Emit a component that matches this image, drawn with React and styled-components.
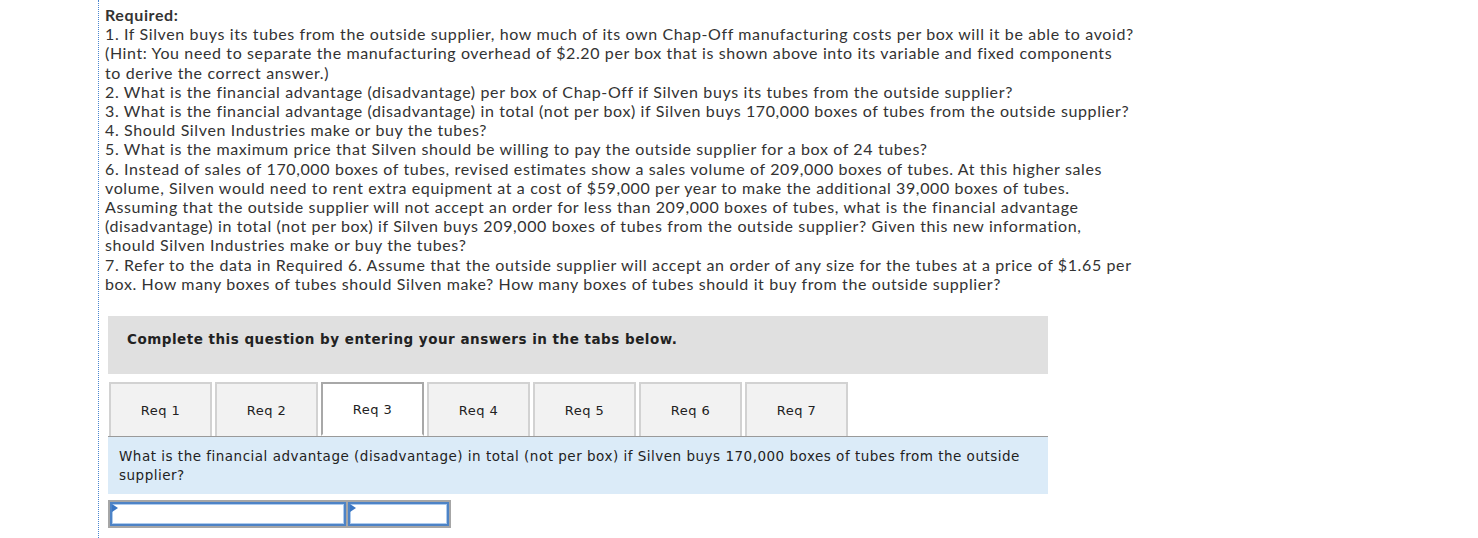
import React from "react";
import styled, { createGlobalStyle } from "styled-components";

const GlobalStyle = createGlobalStyle`
  html, body {
    margin: 0;
    padding: 0;
    background: #fff;
  }
`;

const Page = styled.div`
  margin-left: 98px;
  min-height: 538px;
  border-left: 1px dotted #4a86d0;
  padding: 5px 0 0 6px;
  box-sizing: border-box;
`;

const Prompt = styled.div`
  font-family: Lato, "Liberation Sans", sans-serif;
  font-size: 16px;
  line-height: 19.2px;
  letter-spacing: 0.62px;
  color: #333;
`;

const Heading = styled.div`
  font-weight: 700;
`;

const Line = styled.div`
  white-space: nowrap;
`;

const Work = styled.div`
  margin: 23px 0 0 3px;
  width: 940px;
  font-family: Verdana, "DejaVu Sans", sans-serif;
  font-size: 13.5px;
  letter-spacing: 0.5px;
  color: #222;
`;

const Instructions = styled.div`
  background: #e0e0e0;
  height: 58px;
  box-sizing: border-box;
  padding: 15px 19px 0;
  line-height: 16px;
  font-weight: 700;
  color: #222;
`;

const TabRow = styled.div`
  display: flex;
  gap: 3px;
  margin-top: 8px;
  padding-left: 1px;
  border-bottom: 1px solid #9a9a9a;
`;

const Tab = styled.div`
  box-sizing: border-box;
  width: 103px;
  height: 54px;
  display: flex;
  align-items: center;
  justify-content: center;
  font-size: 13px;
  color: #222;
  background: ${p => (p.$active ? "#fff" : "#f2f2f2")};
  border: 2px solid ${p => (p.$active ? "#a8a8a8" : "#d2d2d2")};
  border-bottom: ${p => (p.$active ? "2px solid #fff" : "none")};
  margin-bottom: ${p => (p.$active ? "-1px" : "0")};
`;

const Question = styled.div`
  background: #dbebf8;
  padding: 10px 11px;
  line-height: 19px;
  color: #222;
  height: 57px;
  box-sizing: border-box;
`;

const AnswerRow = styled.div`
  display: flex;
  margin-top: 6px;
  width: 343px;
  box-sizing: border-box;
  border: 2px solid #a6a6a6;
`;

const Cell = styled.div`
  position: relative;
  box-sizing: border-box;
  width: ${p => p.$w}px;
  height: 24px;
  border: 2px solid #4d83c6;
  box-shadow: inset 0 0 0 1px #aecbed;
  background: #fff;
  &::after {
    content: "";
    position: absolute;
    left: 0;
    top: 0;
    border-top: 4px solid transparent;
    border-bottom: 4px solid transparent;
    border-left: 6px solid #3a76c4;
  }
`;

const Divider = styled.div`
  width: 2px;
  background: #a6a6a6;
`;

const lines = [
  "1. If Silven buys its tubes from the outside supplier, how much of its own Chap-Off manufacturing costs per box will it be able to avoid?",
  "(Hint: You need to separate the manufacturing overhead of $2.20 per box that is shown above into its variable and fixed components",
  "to derive the correct answer.)",
  "2. What is the financial advantage (disadvantage) per box of Chap-Off if Silven buys its tubes from the outside supplier?",
  "3. What is the financial advantage (disadvantage) in total (not per box) if Silven buys 170,000 boxes of tubes from the outside supplier?",
  "4. Should Silven Industries make or buy the tubes?",
  "5. What is the maximum price that Silven should be willing to pay the outside supplier for a box of 24 tubes?",
  "6. Instead of sales of 170,000 boxes of tubes, revised estimates show a sales volume of 209,000 boxes of tubes. At this higher sales",
  "volume, Silven would need to rent extra equipment at a cost of $59,000 per year to make the additional 39,000 boxes of tubes.",
  "Assuming that the outside supplier will not accept an order for less than 209,000 boxes of tubes, what is the financial advantage",
  "(disadvantage) in total (not per box) if Silven buys 209,000 boxes of tubes from the outside supplier? Given this new information,",
  "should Silven Industries make or buy the tubes?",
  "7. Refer to the data in Required 6. Assume that the outside supplier will accept an order of any size for the tubes at a price of $1.65 per",
  "box. How many boxes of tubes should Silven make? How many boxes of tubes should it buy from the outside supplier?",
];

const tabs = ["Req 1", "Req 2", "Req 3", "Req 4", "Req 5", "Req 6", "Req 7"];

export default function App() {
  return (
    <>
      <GlobalStyle />
      <Page>
        <Prompt>
          <Heading>Required:</Heading>
          {lines.map((l, i) => (
            <Line key={i}>{l}</Line>
          ))}
        </Prompt>
        <Work>
          <Instructions>
            Complete this question by entering your answers in the tabs below.
          </Instructions>
          <TabRow>
            {tabs.map(t => (
              <Tab key={t} $active={t === "Req 3"}>
                {t}
              </Tab>
            ))}
          </TabRow>
          <Question>
            What is the financial advantage (disadvantage) in total (not per box) if Silven buys 170,000 boxes of tubes from the outside
            <br />
            supplier?
          </Question>
          <AnswerRow>
            <Cell $w={236} />
            <Divider />
            <Cell $w={101} />
          </AnswerRow>
        </Work>
      </Page>
    </>
  );
}
